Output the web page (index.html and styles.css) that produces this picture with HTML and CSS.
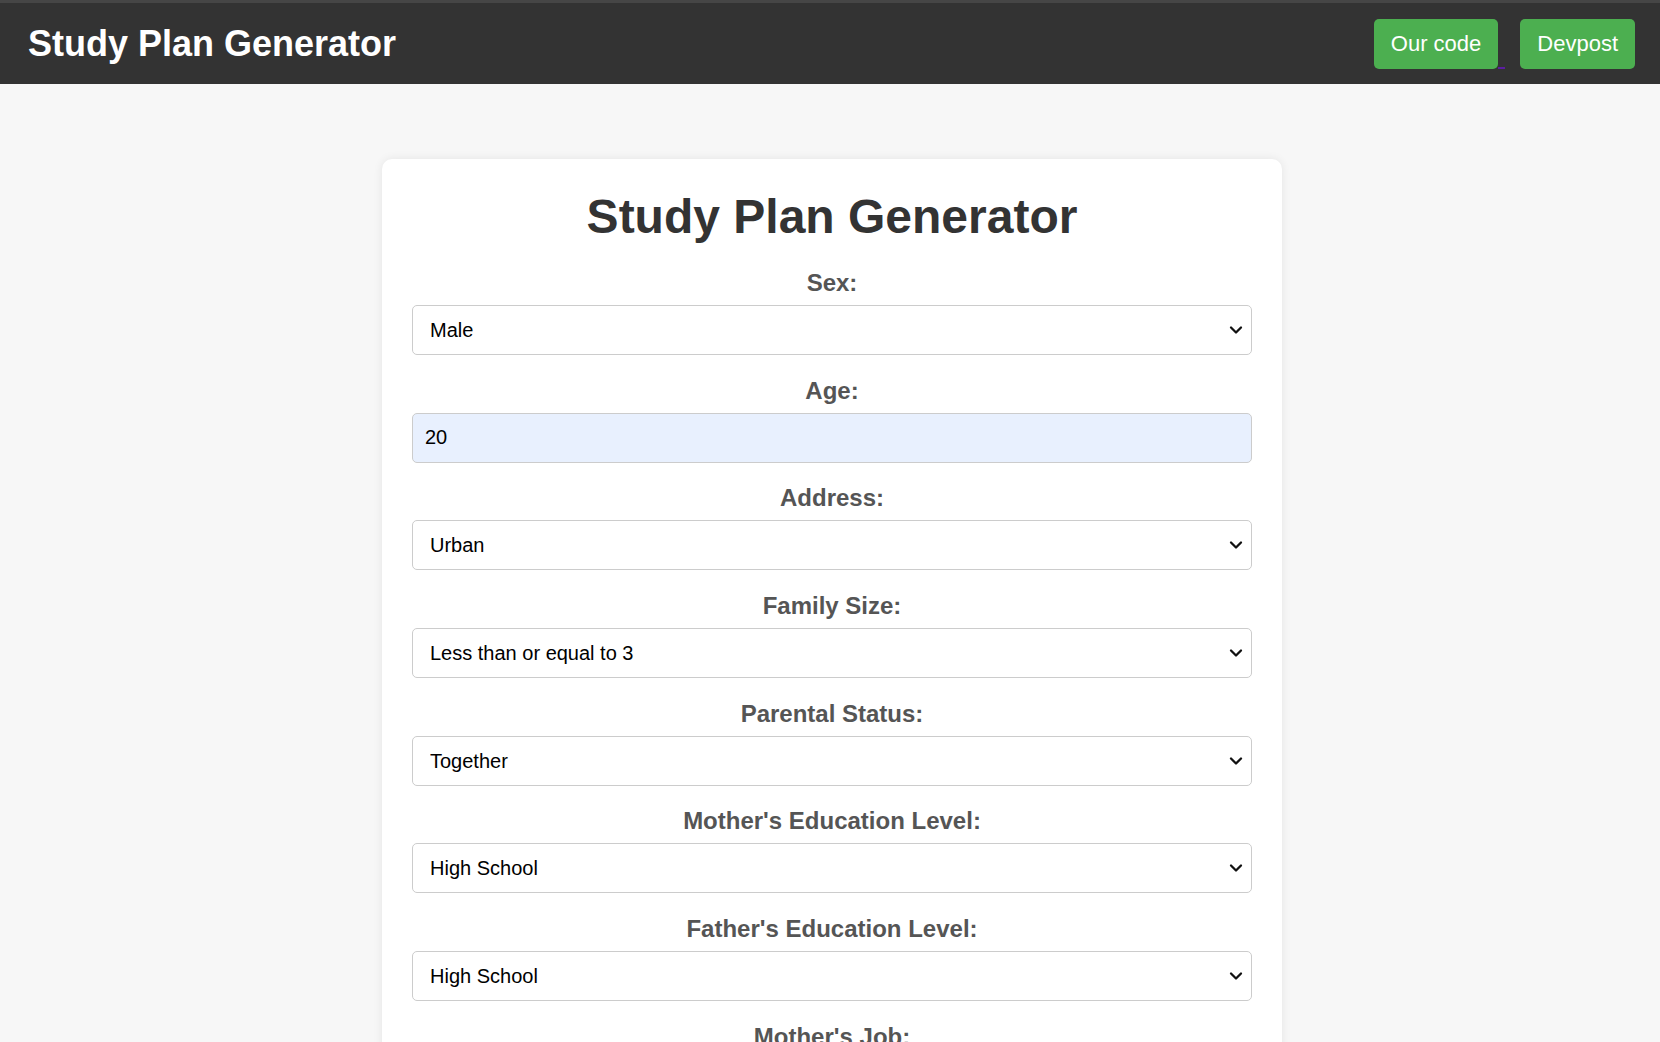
FILE: index.html
```html
<!DOCTYPE html>
<html lang="en">
<head>
<meta charset="utf-8">
<title>Study Plan Generator</title>
<link rel="stylesheet" href="styles.css">
</head>
<body>
<header class="topbar">
  <h1 class="brand">Study Plan Generator</h1>
  <nav class="nav">
    <a class="navlink" href="#"><span class="btn">Our code</span><span class="trail"></span></a>
    <a class="navlink" href="#"><span class="btn">Devpost</span></a>
  </nav>
</header>
<main class="page">
  <form class="card">
    <h2 class="card-title">Study Plan Generator</h2>
    <label class="field-label">Sex:</label>
    <select class="field field-select"><option>Male</option><option>Female</option></select>
    <label class="field-label">Age:</label>
    <input class="field field-filled" type="text" value="20">
    <label class="field-label">Address:</label>
    <select class="field field-select"><option>Urban</option><option>Rural</option></select>
    <label class="field-label">Family Size:</label>
    <select class="field field-select"><option>Less than or equal to 3</option><option>Greater than 3</option></select>
    <label class="field-label">Parental Status:</label>
    <select class="field field-select"><option>Together</option><option>Apart</option></select>
    <label class="field-label">Mother's Education Level:</label>
    <select class="field field-select"><option>High School</option></select>
    <label class="field-label">Father's Education Level:</label>
    <select class="field field-select"><option>High School</option></select>
    <label class="field-label">Mother's Job:</label>
    <select class="field field-select"><option>Teacher</option></select>
    <label class="field-label">Father's Job:</label>
    <select class="field field-select"><option>Teacher</option></select>
  </form>
</main>
</body>
</html>
```
FILE: styles.css
```css
html, body {
  margin: 0;
  padding: 0;
}
body {
  background: #f7f7f7;
  font-family: "Liberation Sans", Arial, sans-serif;
  color: #333;
}
.topbar {
  box-sizing: border-box;
  height: 84px;
  border-top: 3px solid #464646;
  background: #333333;
  display: flex;
  align-items: center;
  justify-content: space-between;
  padding: 0 25px 0 28px;
}
.brand {
  margin: 0;
  color: #fff;
  font-size: 36px;
  font-weight: bold;
  line-height: 42px;
}
.nav {
  display: flex;
  align-items: center;
}
.navlink {
  display: flex;
  align-items: flex-end;
  text-decoration: none;
}
.btn {
  display: flex;
  align-items: center;
  height: 50px;
  padding: 0 17px;
  background: #4caf50;
  color: #fff;
  font-size: 22px;
  border-radius: 5px;
}
.trail {
  width: 7px;
  height: 16px;
  margin-right: 15px;
  border-bottom: 2px solid #5b1ea0;
}
.page {
  padding: 75px 0 40px 4px;
}
.card {
  box-sizing: border-box;
  width: 900px;
  margin: 0 auto;
  padding: 30px;
  background: #fff;
  border-radius: 10px;
  box-shadow: 0 0 10px rgba(0, 0, 0, 0.08);
  display: flex;
  flex-direction: column;
}
.card-title {
  margin: 0 0 25px;
  text-align: center;
  font-size: 48px;
  line-height: 55px;
  font-weight: bold;
  color: #333;
}
.field-label {
  display: block;
  text-align: center;
  font-size: 24px;
  line-height: 27px;
  font-weight: bold;
  color: #555;
  margin-bottom: 9px;
}
.field {
  box-sizing: border-box;
  width: 100%;
  height: 50px;
  margin: 0 0 21.7px;
  padding: 0 12px;
  font-family: "Liberation Sans", Arial, sans-serif;
  font-size: 20px;
  color: #000;
  background-color: #fff;
  border: 1px solid #ccc;
  border-radius: 5px;
}
.field-select {
  -webkit-appearance: none;
  appearance: none;
  padding-left: 17px;
  padding-right: 40px;
  background-image: url("data:image/svg+xml,%3Csvg xmlns='http://www.w3.org/2000/svg' width='14' height='10' viewBox='0 0 14 10'%3E%3Cpath d='M2 2.5 L7 7.5 L12 2.5' fill='none' stroke='%23111' stroke-width='2.3' stroke-linecap='round' stroke-linejoin='round'/%3E%3C/svg%3E");
  background-repeat: no-repeat;
  background-position: right 8px center;
  background-size: 14px 10px;
}
.field-filled {
  background-color: #e8f0fe;
}
```
